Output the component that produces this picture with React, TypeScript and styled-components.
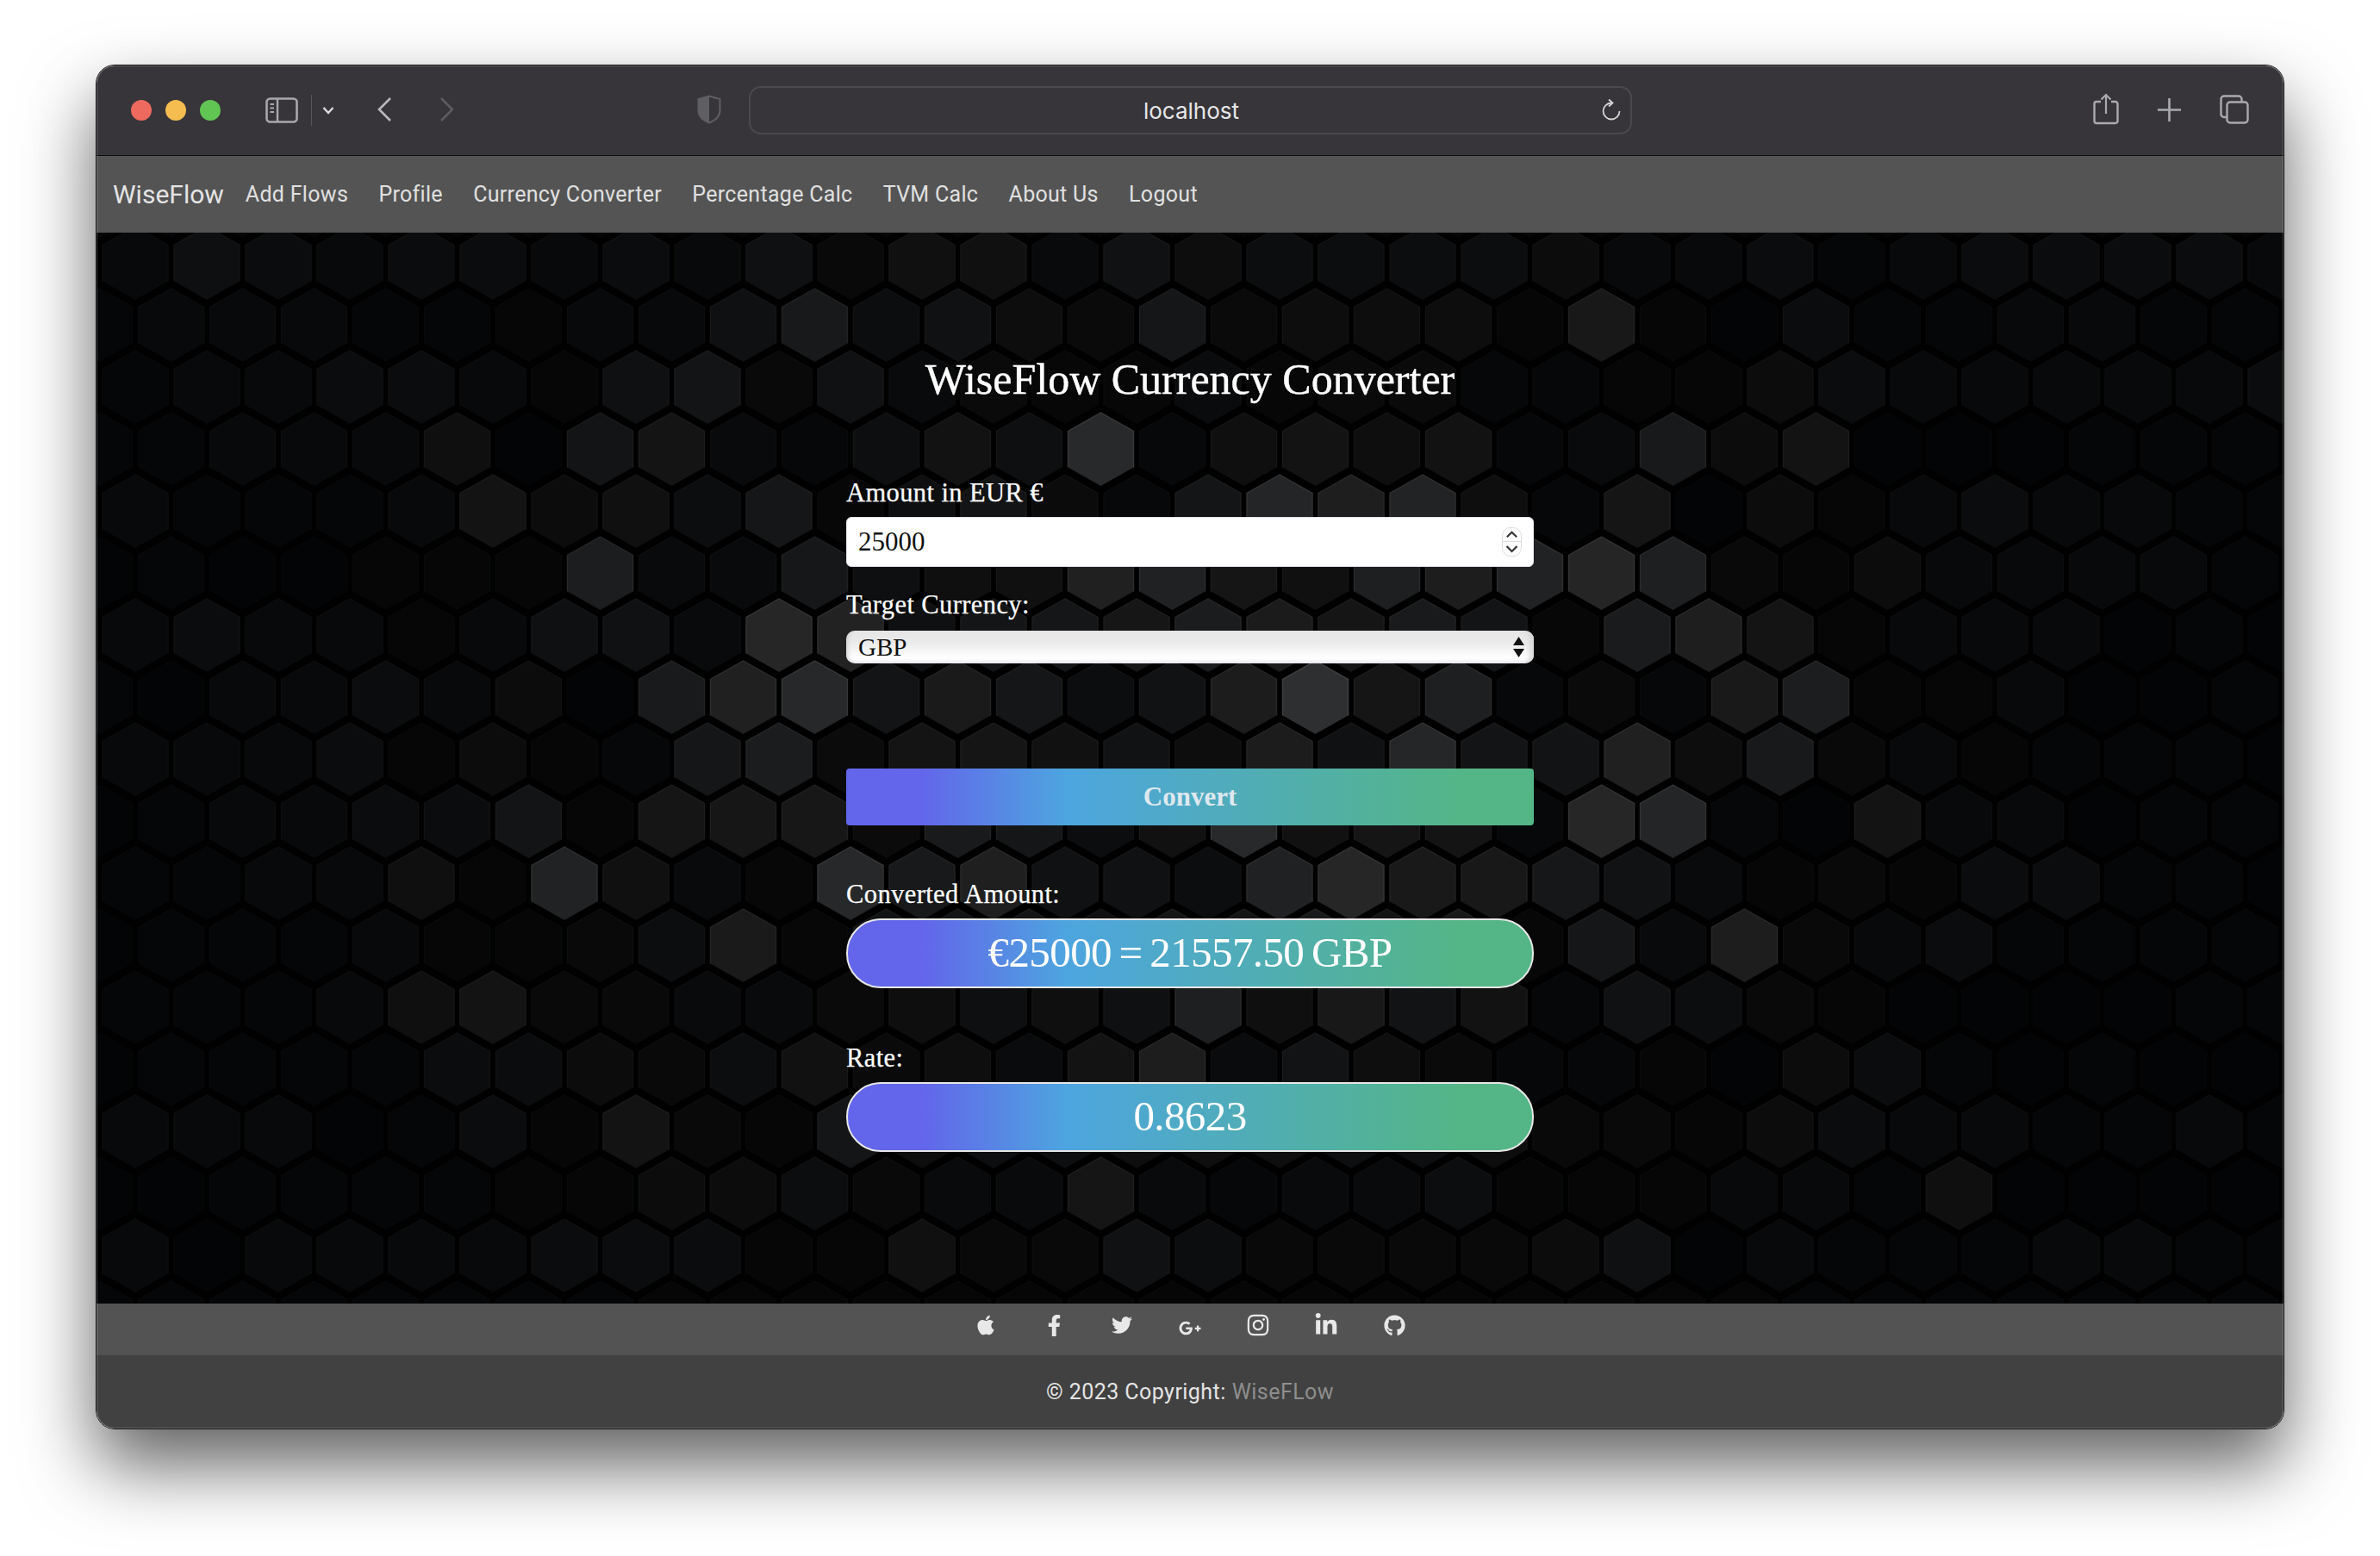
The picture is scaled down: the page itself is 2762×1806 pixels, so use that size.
import React from "react";
import styled, { createGlobalStyle } from "styled-components";
import {
  FaApple,
  FaFacebookF,
  FaTwitter,
  FaGooglePlusG,
  FaInstagram,
  FaLinkedinIn,
  FaGithub,
} from "react-icons/fa";

const GlobalStyle = createGlobalStyle`
  html, body { margin: 0; padding: 0; background: #fff; }
  * { box-sizing: border-box; }
`;

const SERIF = `"Liberation Serif", "Times New Roman", serif`;
const SANS = `Roboto, "Liberation Sans", sans-serif`;
const GRADIENT = `linear-gradient(90deg, #6366ea 11%, #4da5df 32%, #54b686 90%)`;

const Page = styled.div`
  width: 2762px;
  height: 1806px;
  padding: 75px 111px 0;
  overflow: hidden;
`;

const Window = styled.div`
  position: relative;
  width: 2540px;
  height: 1584px;
  display: flex;
  flex-direction: column;
  border: 1px solid #0b0b0b;
  border-radius: 22px;
  overflow: hidden;
  box-shadow: 0 42px 84px rgba(0, 0, 0, 0.62);

  &::after {
    content: "";
    position: absolute;
    inset: 0;
    border-radius: 21px;
    box-shadow: inset 0 0 0 1px rgba(255, 255, 255, 0.24);
    pointer-events: none;
  }
`;

const TitleBar = styled.header`
  flex: 0 0 105px;
  display: flex;
  align-items: center;
  padding: 0 40px;
  background: #37353a;
  border-bottom: 1px solid #0c0c0c;
`;

const Lights = styled.div`
  display: flex;
  gap: 16px;
  margin-right: 52px;
`;

const Light = styled.span<{ $color: string }>`
  width: 24px;
  height: 24px;
  border-radius: 50%;
  background: ${(p) => p.$color};
`;

const Divider = styled.span`
  width: 1px;
  height: 36px;
  margin: 0 12px 0 15px;
  background: #57565a;
`;

const ToolIcon = styled.svg<{ $ml?: number; $mt?: number }>`
  display: block;
  flex: none;
  margin-left: ${(p) => p.$ml ?? 0}px;
  margin-top: ${(p) => p.$mt ?? 0}px;
`;

const UrlBar = styled.div`
  position: relative;
  width: 1025px;
  height: 56px;
  margin-left: 32px;
  padding-left: 2px;
  display: flex;
  align-items: center;
  justify-content: center;
  border: 2px solid #4a494e;
  border-radius: 14px;
  color: #e6e6e7;
  font: 400 26px Inter, "Liberation Sans", sans-serif;
`;

const Reload = styled.svg`
  position: absolute;
  right: 10px;
  top: 11px;
`;

const ToolRight = styled.div`
  display: flex;
  align-items: center;
  gap: 45px;
  margin-left: auto;
`;

const Nav = styled.nav`
  flex: 0 0 89px;
  display: flex;
  align-items: center;
  padding-left: 19px;
  background: #545454;
  font-family: ${SANS};
`;

const Brand = styled.a`
  margin-right: 25px;
  color: #e4e4e4;
  font-size: 30px;
`;

const NavLinks = styled.div`
  display: flex;
  gap: 35.3px;
`;

const NavLink = styled.a`
  color: #e0e0e0;
  font-size: 25px;
  letter-spacing: 0.3px;
`;

const Main = styled.main`
  position: relative;
  flex: 1;
  display: flex;
  flex-direction: column;
  align-items: center;
  padding-top: 140px;
  background: #010101;
  font-family: ${SERIF};
  overflow: hidden;
`;

const HexLayer = styled.svg`
  position: absolute;
  inset: 0;
`;

const Form = styled.div`
  position: relative;
  width: 798px;
  display: flex;
  flex-direction: column;
`;

const Title = styled.h1`
  margin: 0 0 84px;
  color: #fff;
  font: 400 50px/60px ${SERIF};
  text-align: center;
  -webkit-text-stroke: 0.4px #fff;
`;

const Label = styled.label<{ $top?: number; $bottom?: number }>`
  display: block;
  margin: ${(p) => p.$top ?? 0}px 0 ${(p) => p.$bottom ?? 10}px;
  color: #fff;
  font-size: 30.5px;
  line-height: 36px;
  letter-spacing: 0.4px;
  -webkit-text-stroke: 0.25px #fff;
`;

const InputWrap = styled.div`
  position: relative;
`;

const NumberInput = styled.input`
  display: block;
  width: 100%;
  height: 58px;
  padding: 0 13px;
  border: 1px solid #e2e2ea;
  border-radius: 6px;
  background: #fff;
  color: #111;
  font: 400 31px ${SERIF};
  outline: none;
`;

const Spinner = styled.span`
  position: absolute;
  right: 14px;
  top: 12px;
  width: 23px;
  height: 34px;
  display: flex;
  flex-direction: column;
  border: 1px solid #dedede;
  border-radius: 10px;
`;

const SpinPart = styled.svg<{ $line?: boolean }>`
  display: block;
  width: 21px;
  height: 16px;
  border-bottom: ${(p) => (p.$line ? "1px solid #dcdcdc" : "none")};
`;

const Select = styled.select`
  display: block;
  width: 100%;
  height: 38px;
  padding: 0 14px;
  border: 0;
  border-radius: 10px;
  appearance: none;
  background: linear-gradient(180deg, #e6e6e6 0%, #eaeaea 35%, #ffffff 85%, #e9e9ef 100%);
  box-shadow: inset 6px 0 5px -4px #cfcfcf, inset -8px 0 6px -4px #d2d2d2;
  color: #111;
  font: 400 29px/36px ${SERIF};
  outline: none;
`;

const SelectArrows = styled.svg`
  position: absolute;
  right: 11px;
  top: 7px;
  pointer-events: none;
`;

const ConvertButton = styled.button`
  height: 66px;
  margin-top: 122px;
  border: 0;
  border-radius: 4px;
  background: ${GRADIENT};
  color: #dfe8ee;
  font: 700 31px ${SERIF};
`;

const ResultPill = styled.output`
  display: block;
  height: 81px;
  border: 2px solid #e7e7e7;
  border-radius: 40px;
  background: ${GRADIENT};
  color: #fff;
  font: 400 49px/76px ${SERIF};
  letter-spacing: -0.6px;
  word-spacing: -3px;
  text-align: center;
`;

const SocialBar = styled.div`
  flex: 0 0 60px;
  display: flex;
  justify-content: center;
  align-items: flex-start;
  gap: 53px;
  padding-top: 12px;
  background: #535353;
`;

const SocialIcon = styled.a<{ $size: number; $drop?: number }>`
  width: 26px;
  height: 26px;
  margin-top: ${(p) => p.$drop ?? 0}px;
  display: flex;
  align-items: center;
  justify-content: center;
  color: #e8e8e8;
  font-size: ${(p) => p.$size}px;
`;

const Copyright = styled.footer`
  flex: 0 0 85px;
  display: flex;
  align-items: center;
  justify-content: center;
  background: #414141;
  color: #e4e4e4;
  font: 400 25px ${SANS};
  letter-spacing: 0.45px;
`;

const CopyLink = styled.a`
  margin-left: 7px;
  color: #8e8e8e;
`;

// brightness of every hexagon, one string per row, read off the picture
const HEX_ROWS = [
  "24323323242" + "442433333" + "32231233332",
  "12221112246" + "343252333" + "16103112211",
  "12233214524" + "221121221" + "11133222223",
  "11222405521" + "343813434" + "12635000111",
  "21112534351" + "342147673" + "15031232211",
  "01001117225" + "333664366" + "78721322221",
  "23221244287" + "344455454" + "16751222010",
  "10223230678" + "454235846" + "12167112001",
  "22231311562" + "443325374" + "47362211110",
  "01223351555" + "254237344" + "18810522011",
  "11224184218" + "563326755" + "54212133110",
  "01112112361" + "444344545" + "15272231111",
  "11124522222" + "333363544" + "14321000011",
  "01111333234" + "232462432" + "11103310100",
  "22201315215" + "333333333" + "22133221121",
  "00111111333" + "222521223" + "11122140000",
  "20222233311" + "422432222" + "34021112211",
];

const hexPoints = (cx: number, cy: number) =>
  [
    [cx, cy - 42.5],
    [cx + 38, cy - 21],
    [cx + 38, cy + 21],
    [cx, cy + 42.5],
    [cx - 38, cy + 21],
    [cx - 38, cy - 21],
  ]
    .map((p) => p.join(","))
    .join(" ");

// the light sits behind the form, so hexagons get brighter towards it
const hexLevel = (d: number, cx: number, cy: number) => {
  const dist = Math.hypot(cx - 1268, (cy - 600) * 1.1);
  const glow = 1 + 0.55 * Math.exp(-((dist / 520) ** 2));
  return (3 + 2.2 * d + 0.16 * d * d) * glow;
};

const grey = (v: number) => `rgb(${v.toFixed(1)},${(v + 0.5).toFixed(1)},${(v + 1.5).toFixed(1)})`;

function HexBackground() {
  const hexes: React.ReactNode[] = [];
  for (let r = -1; r <= 17; r++) {
    const row = HEX_ROWS[r] ?? "1".repeat(31);
    const odd = r % 2 !== 0;
    for (let c = 0; c < 31; c++) {
      const cx = odd ? 3.5 + 83 * c : 45 + 83 * c;
      const cy = 35.5 + 72 * r;
      const v = hexLevel(Number(row[c]), cx, cy);
      hexes.push(
        <g key={`${r}-${c}`}>
          <polygon points={hexPoints(cx, cy)} fill={grey(v)} />
          <polyline
            points={`${cx - 38},${cy + 21} ${cx - 38},${cy - 21} ${cx},${cy - 42.5} ${cx + 38},${cy - 21} ${cx + 38},${cy + 21}`}
            fill="none"
            stroke={grey(v * 1.35 + 1.5)}
            strokeWidth="1.4"
          />
        </g>
      );
    }
  }
  return (
    <HexLayer width="2538" height="1243" viewBox="0 0 2538 1243">
      {hexes}
    </HexLayer>
  );
}

const navItems = [
  "Add Flows",
  "Profile",
  "Currency Converter",
  "Percentage Calc",
  "TVM Calc",
  "About Us",
  "Logout",
];

export default function App() {
  return (
    <Page>
      <GlobalStyle />
      <Window>
        <TitleBar>
          <Lights>
            <Light $color="#ee6a5f" />
            <Light $color="#f5bd4f" />
            <Light $color="#61c554" />
          </Lights>
          <ToolIcon width="38" height="30" viewBox="0 0 38 30" fill="none">
            <rect x="1.5" y="1.5" width="35" height="27" rx="4" stroke="#a9a9ac" strokeWidth="2.6" />
            <path d="M14 2v26" stroke="#a9a9ac" strokeWidth="2.4" />
            <path d="M5.5 8h4.5M5.5 12.5h4.5M5.5 17h4.5" stroke="#a9a9ac" strokeWidth="1.8" />
          </ToolIcon>
          <Divider />
          <ToolIcon width="14" height="10" viewBox="0 0 14 10" fill="none">
            <path d="M1.5 2 7 8l5.5-6" stroke="#dcdcdc" strokeWidth="2.4" />
          </ToolIcon>
          <ToolIcon $ml={49} $mt={-2} width="18" height="30" viewBox="0 0 18 30" fill="none">
            <path d="M16 2 3 15l13 13" stroke="#b9b9bc" strokeWidth="2.6" />
          </ToolIcon>
          <ToolIcon $ml={55} $mt={-2} width="18" height="30" viewBox="0 0 18 30" fill="none">
            <path d="M2 2l13 13L2 28" stroke="#5c5b60" strokeWidth="2.6" />
          </ToolIcon>
          <ToolIcon $ml={281} $mt={-2} width="28" height="34" viewBox="0 0 28 34" fill="none">
            <path d="M14 1.5 26.5 5v13c0 7-6 12-12.5 14.5C7.500 30 1.500 25 1.500 18V5z" stroke="#5f5e63" strokeWidth="2" />
            <path d="M14 1.500 1.500 5v13c0 7 6 12 12.500 14.500z" fill="#5f5e63" />
          </ToolIcon>
          <UrlBar>
            localhost
            <Reload width="26" height="28" viewBox="0 0 26 28" fill="none">
              <path d="M14 6.500A9.500 9.500 0 1 0 23.500 16" stroke="#d4d4d4" strokeWidth="1.8" />
              <path d="M11 2.500 15.500 6.500 11 10.500" stroke="#d4d4d4" strokeWidth="1.8" />
            </Reload>
          </UrlBar>
          <ToolRight>
            <ToolIcon $mt={-4} width="30" height="37" viewBox="0 0 30 37" fill="none">
              <path d="M9 10H4a2.500 2.500 0 0 0-2.500 2.500v20A2.500 2.500 0 0 0 4 35h22a2.500 2.500 0 0 0 2.500-2.500v-20A2.500 2.500 0 0 0 26 10h-5" stroke="#aaaaad" strokeWidth="2.4" />
              <path d="M15 24V2M9.500 7.500 15 2l5.500 5.500" stroke="#aaaaad" strokeWidth="2.2" />
            </ToolIcon>
            <ToolIcon $mt={-2} width="27" height="27" viewBox="0 0 27 27" fill="none">
              <path d="M13.500 0v27M0 13.500h27" stroke="#aaaaad" strokeWidth="2.6" />
            </ToolIcon>
            <ToolIcon $mt={-2} width="34" height="34" viewBox="0 0 34 34" fill="none">
              <path d="M8 26H5a3.500 3.500 0 0 1-3.500-3.500V5A3.500 3.500 0 0 1 5 1.500h17A3.500 3.500 0 0 1 25.500 5v3" stroke="#aaaaad" strokeWidth="2.4" />
              <rect x="8.500" y="8.500" width="24" height="24" rx="3.500" stroke="#aaaaad" strokeWidth="2.4" />
            </ToolIcon>
          </ToolRight>
        </TitleBar>

        <Nav>
          <Brand>WiseFlow</Brand>
          <NavLinks>
            {navItems.map((item) => (
              <NavLink key={item}>{item}</NavLink>
            ))}
          </NavLinks>
        </Nav>

        <Main>
          <HexBackground />
          <Form>
            <Title>WiseFlow Currency Converter</Title>
            <Label>Amount in EUR €</Label>
            <InputWrap>
              <NumberInput type="text" defaultValue="25000" />
              <Spinner>
                <SpinPart $line viewBox="0 0 21 16" fill="none">
                  <path d="M4.500 11 10.500 5l6 6" stroke="#333" strokeWidth="2.2" />
                </SpinPart>
                <SpinPart viewBox="0 0 21 16" fill="none">
                  <path d="M4.500 5 10.500 11l6-6" stroke="#333" strokeWidth="2.2" />
                </SpinPart>
              </Spinner>
            </InputWrap>
            <Label $top={26} $bottom={12}>Target Currency:</Label>
            <InputWrap>
              <Select defaultValue="GBP">
                <option value="GBP">GBP</option>
              </Select>
              <SelectArrows width="13" height="24" viewBox="0 0 13 24">
                <path d="M6.500 0 13 10H0z" fill="#111" />
                <path d="M6.500 24 13 14H0z" fill="#111" />
              </SelectArrows>
            </InputWrap>
            <ConvertButton type="button">Convert</ConvertButton>
            <Label $top={62}>Converted Amount:</Label>
            <ResultPill>€25000 = 21557.50 GBP</ResultPill>
            <Label $top={63} $bottom={10}>Rate:</Label>
            <ResultPill>0.8623</ResultPill>
          </Form>
        </Main>

        <SocialBar>
          <SocialIcon $size={26}><FaApple /></SocialIcon>
          <SocialIcon $size={25}><FaFacebookF /></SocialIcon>
          <SocialIcon $size={24}><FaTwitter /></SocialIcon>
          <SocialIcon $size={31} $drop={3}><FaGooglePlusG /></SocialIcon>
          <SocialIcon $size={28}><FaInstagram /></SocialIcon>
          <SocialIcon $size={28}><FaLinkedinIn /></SocialIcon>
          <SocialIcon $size={25}><FaGithub /></SocialIcon>
        </SocialBar>
        <Copyright>
          © 2023 Copyright:<CopyLink>WiseFLow</CopyLink>
        </Copyright>
      </Window>
    </Page>
  );
}
